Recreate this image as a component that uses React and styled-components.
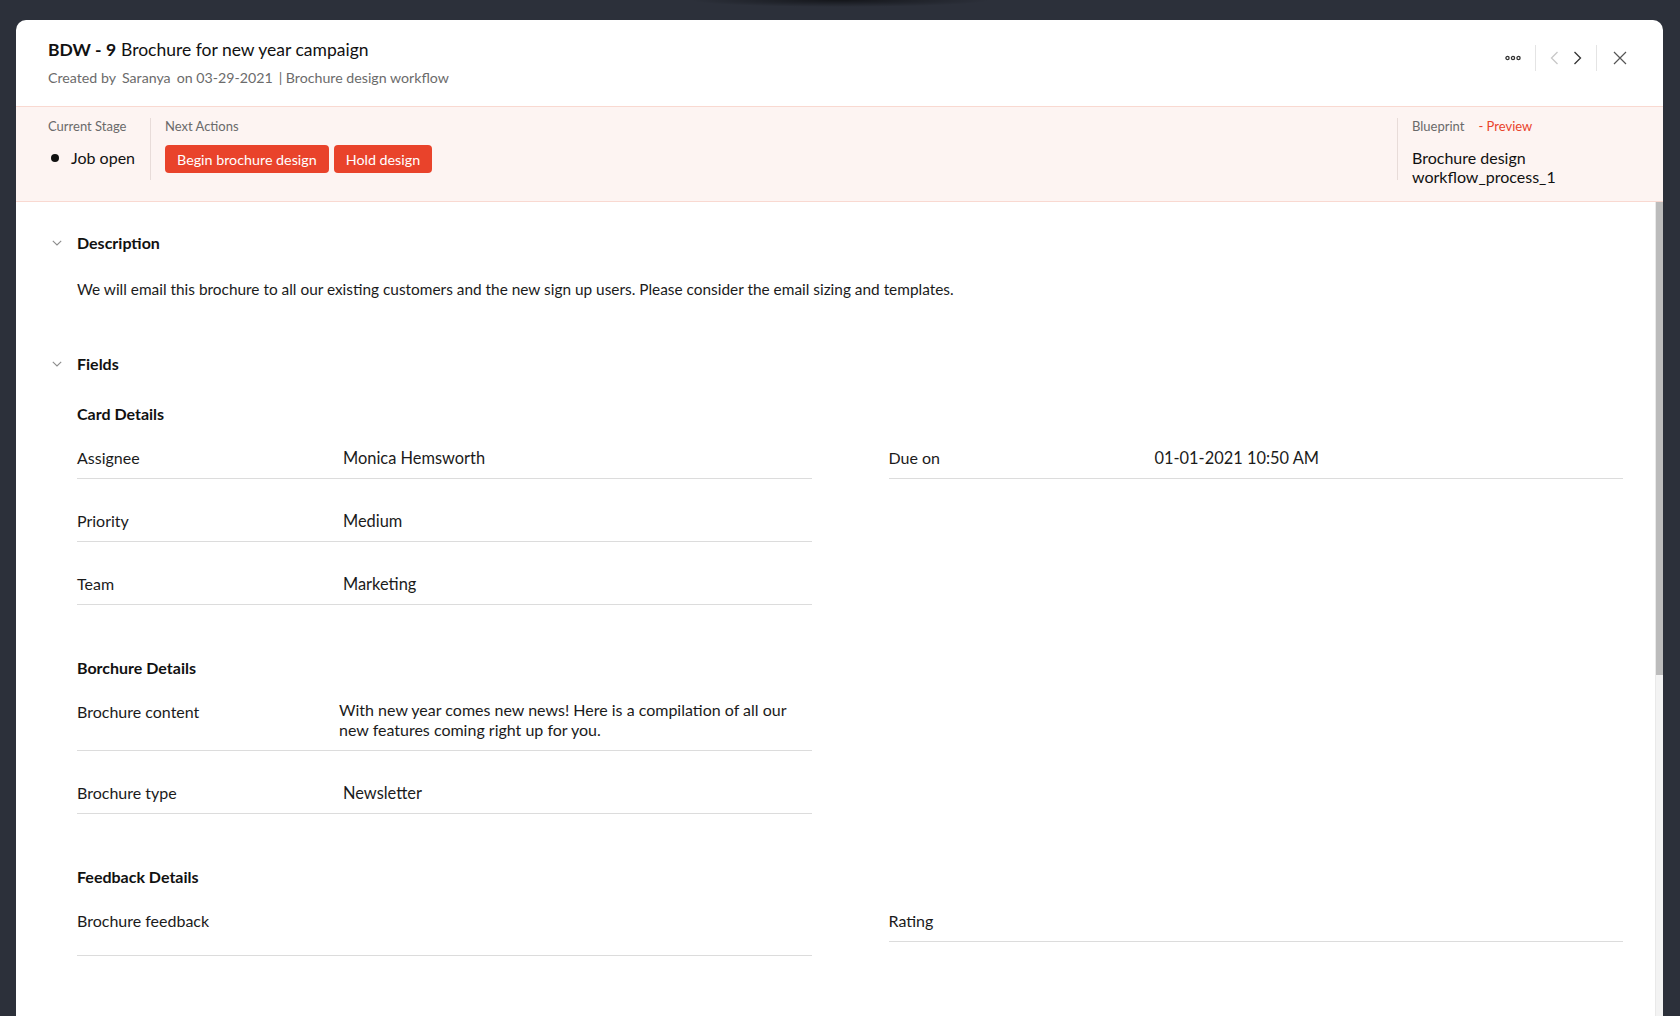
import React from 'react';
import styled, { createGlobalStyle } from 'styled-components';

const GlobalStyle = createGlobalStyle`
  html, body {
    margin: 0;
    padding: 0;
    height: 100%;
  }
  body {
    background: radial-gradient(ellipse 150px 7px at 840px 0, rgba(0, 0, 0, 0.55), rgba(0, 0, 0, 0)), #2c303a;
    font-family: Lato, "Open Sans", "Liberation Sans", sans-serif;
    color: #1b1b1b;
    overflow: hidden;
  }
  * {
    box-sizing: border-box;
  }
`;

const Modal = styled.div`
  margin: 20px 17px 0 16px;
  height: 996px;
  background: #fff;
  border-radius: 10px 10px 0 0;
  display: flex;
  flex-direction: column;
  overflow: hidden;
`;

const Header = styled.header`
  flex-shrink: 0;
  height: 86px;
  padding: 19px 36px 0 32px;
  display: flex;
  justify-content: space-between;
  align-items: flex-start;
`;

const Title = styled.h1`
  margin: 0;
  font-size: 17.5px;
  line-height: 22px;
  font-weight: 400;
  color: #111;

  b {
    font-weight: 700;
    margin-right: 5px;
  }
`;

const Meta = styled.div`
  margin-top: 8px;
  display: flex;
  gap: 6px;
  font-size: 14.2px;
  line-height: 18px;
  color: #6b6b6b;
`;

const Tools = styled.div`
  margin-top: 6px;
  height: 26px;
  display: flex;
  align-items: center;
  gap: 14px;
`;

const ToolSep = styled.span`
  width: 1px;
  height: 26px;
  background: #e4e4e4;
`;

const IconButton = styled.button`
  border: 0;
  padding: 0;
  margin-left: ${(p) => (p.$wide ? 2 : 0)}px;
  background: none;
  display: flex;
  align-items: center;
  color: ${(p) => (p.$muted ? '#c8c8c8' : '#333')};
  cursor: pointer;
`;

const StageBar = styled.section`
  flex-shrink: 0;
  height: 96px;
  padding: 11px 0 0 32px;
  display: flex;
  background: #fdf4f2;
  border-top: 1px solid #f9d9d1;
  border-bottom: 1px solid #f9d9d1;
`;

const StageCol = styled.div`
  height: 62px;
  padding-left: ${(p) => (p.$first ? 0 : 14)}px;
  border-left: ${(p) => (p.$first ? 'none' : '1px solid #e8dcd9')};
  ${(p) => p.$first && 'width: 102px;'}
  ${(p) => p.$end && 'margin-left: auto; width: 266px;'}
`;

const StageLabel = styled.div`
  font-size: 13px;
  line-height: 16px;
  color: #6a6a6a;

  span {
    margin-left: 14px;
    color: #e9432b;
  }
`;

const StageValue = styled.div`
  margin-top: 14px;
  display: flex;
  align-items: center;
  gap: 12px;
  font-size: 16px;
  line-height: 20px;
  color: #111;
`;

const Dot = styled.span`
  width: 8px;
  height: 8px;
  border-radius: 50%;
  background: #111;
  margin-left: 3px;
`;

const Actions = styled.div`
  margin-top: 11px;
  display: flex;
  gap: 5px;
`;

const ActionButton = styled.button`
  height: 28px;
  padding: 0 12px;
  border: 0;
  border-radius: 4px;
  background: #e9432b;
  color: #fff;
  font-family: inherit;
  font-size: 14.3px;
  cursor: pointer;
`;

const Blueprint = styled.div`
  margin-top: 14px;
  font-size: 16px;
  line-height: 19px;
  color: #111;

  span {
    display: block;
  }
`;

const BodyArea = styled.div`
  flex: 1;
  min-height: 0;
  display: flex;
`;

const Content = styled.div`
  flex: 1;
  min-width: 0;
  overflow: hidden;
  padding: 31px 32px 0 36px;
`;

const ScrollTrack = styled.div`
  flex: none;
  width: 8px;
  background: #f3f3f3;
  border-left: 1px solid #e9e9e9;
`;

const ScrollThumb = styled.div`
  height: 473px;
  background: #bcbcbc;
`;

const Section = styled.section`
  & + & {
    margin-top: 55px;
  }
`;

const SectionHead = styled.div`
  display: flex;
  align-items: center;
  gap: 15px;
  font-size: 16px;
  font-weight: 700;
  line-height: 20px;
  color: #111;

  svg {
    color: #8d8d8d;
  }
`;

const SectionBody = styled.div`
  padding-left: 25px;
`;

const DescText = styled.p`
  margin: 26px 0 0;
  font-size: 15.4px;
  line-height: 20px;
  color: #1b1b1b;
`;

const Group = styled.div`
  margin-top: 30px;

  & + & {
    margin-top: 53px;
  }
`;

const GroupTitle = styled.div`
  font-size: 16px;
  font-weight: 700;
  line-height: 20px;
  color: #111;
`;

const Columns = styled.div`
  display: grid;
  grid-template-columns: 1fr 1fr;
  column-gap: 77px;
  align-items: start;
`;

const Row = styled.div`
  display: flex;
  align-items: flex-start;
  padding: 32px 0 10px;
  border-bottom: 1px solid #dcdcdc;
  font-size: 16px;
  line-height: 20px;
  color: #1b1b1b;

  &:first-child {
    padding-top: 24px;
  }
`;

const Label = styled.div`
  flex: none;
  width: 266px;
`;

const Value = styled.div`
  flex: 1;
  min-height: ${(p) => (p.$tall ? 34 : 20)}px;
  margin-left: ${(p) => (p.$shift ? -4 : 0)}px;
  margin-top: ${(p) => (p.$shift ? -2 : 0)}px;
  font-size: ${(p) => (p.$shift ? 16 : 16.4)}px;
  padding-right: 20px;
`;

const Dots = () => (
  <svg width="16" height="6" viewBox="0 0 16 6" fill="none" stroke="currentColor" strokeWidth="1.3">
    <circle cx="2.5" cy="3" r="1.6" />
    <circle cx="8" cy="3" r="1.6" />
    <circle cx="13.5" cy="3" r="1.6" />
  </svg>
);

const Chevron = ({ dir }) => (
  <svg width="9" height="14" viewBox="0 0 9 14" fill="none" stroke="currentColor" strokeWidth="1.3">
    <path d={dir === 'left' ? 'M7.5 1 L1.5 7 L7.5 13' : 'M1.5 1 L7.5 7 L1.5 13'} />
  </svg>
);

const Close = () => (
  <svg width="14" height="14" viewBox="0 0 14 14" fill="none" stroke="#555" strokeWidth="1.2">
    <path d="M1 1 L13 13 M13 1 L1 13" />
  </svg>
);

const Caret = () => (
  <svg width="10" height="6" viewBox="0 0 10 6" fill="none" stroke="currentColor" strokeWidth="1.1">
    <path d="M0.8 0.8 L5 5 L9.2 0.8" />
  </svg>
);

function Field({ label, value, tall, shift }) {
  return (
    <Row>
      <Label>{label}</Label>
      <Value $tall={tall} $shift={shift}>{value}</Value>
    </Row>
  );
}

export default function App() {
  return (
    <>
      <GlobalStyle />
      <Modal>
        <Header>
          <div>
            <Title>
              <b>BDW - 9</b>Brochure for new year campaign
            </Title>
            <Meta>
              <span>Created by</span>
              <span>Saranya</span>
              <span>on 03-29-2021</span>
              <span>| Brochure design workflow</span>
            </Meta>
          </div>
          <Tools>
            <IconButton><Dots /></IconButton>
            <ToolSep />
            <IconButton $muted><Chevron dir="left" /></IconButton>
            <IconButton><Chevron dir="right" /></IconButton>
            <ToolSep />
            <IconButton $wide><Close /></IconButton>
          </Tools>
        </Header>

        <StageBar>
          <StageCol $first>
            <StageLabel>Current Stage</StageLabel>
            <StageValue>
              <Dot />
              Job open
            </StageValue>
          </StageCol>
          <StageCol>
            <StageLabel>Next Actions</StageLabel>
            <Actions>
              <ActionButton>Begin brochure design</ActionButton>
              <ActionButton>Hold design</ActionButton>
            </Actions>
          </StageCol>
          <StageCol $end>
            <StageLabel>
              Blueprint<span>- Preview</span>
            </StageLabel>
            <Blueprint>
              <span>Brochure design</span>
              <span>workflow_process_1</span>
            </Blueprint>
          </StageCol>
        </StageBar>

        <BodyArea>
          <Content>
            <Section>
              <SectionHead>
                <Caret />
                Description
              </SectionHead>
              <SectionBody>
                <DescText>
                  We will email this brochure to all our existing customers and the new sign up users. Please consider the email sizing and templates.
                </DescText>
              </SectionBody>
            </Section>

            <Section>
              <SectionHead>
                <Caret />
                Fields
              </SectionHead>
              <SectionBody>
                <Group>
                  <GroupTitle>Card Details</GroupTitle>
                  <Columns>
                    <div>
                      <Field label="Assignee" value="Monica Hemsworth" />
                      <Field label="Priority" value="Medium" />
                      <Field label="Team" value="Marketing" />
                    </div>
                    <div>
                      <Field label="Due on" value="01-01-2021 10:50 AM" />
                    </div>
                  </Columns>
                </Group>

                <Group>
                  <GroupTitle>Borchure Details</GroupTitle>
                  <Columns>
                    <div>
                      <Field
                        label="Brochure content"
                        shift
                        value="With new year comes new news! Here is a compilation of all our new features coming right up for you."
                      />
                      <Field label="Brochure type" value="Newsletter" />
                    </div>
                    <div />
                  </Columns>
                </Group>

                <Group>
                  <GroupTitle>Feedback Details</GroupTitle>
                  <Columns>
                    <div>
                      <Field label="Brochure feedback" value="" tall />
                    </div>
                    <div>
                      <Field label="Rating" value="" />
                    </div>
                  </Columns>
                </Group>
              </SectionBody>
            </Section>
          </Content>
          <ScrollTrack>
            <ScrollThumb />
          </ScrollTrack>
        </BodyArea>
      </Modal>
    </>
  );
}
